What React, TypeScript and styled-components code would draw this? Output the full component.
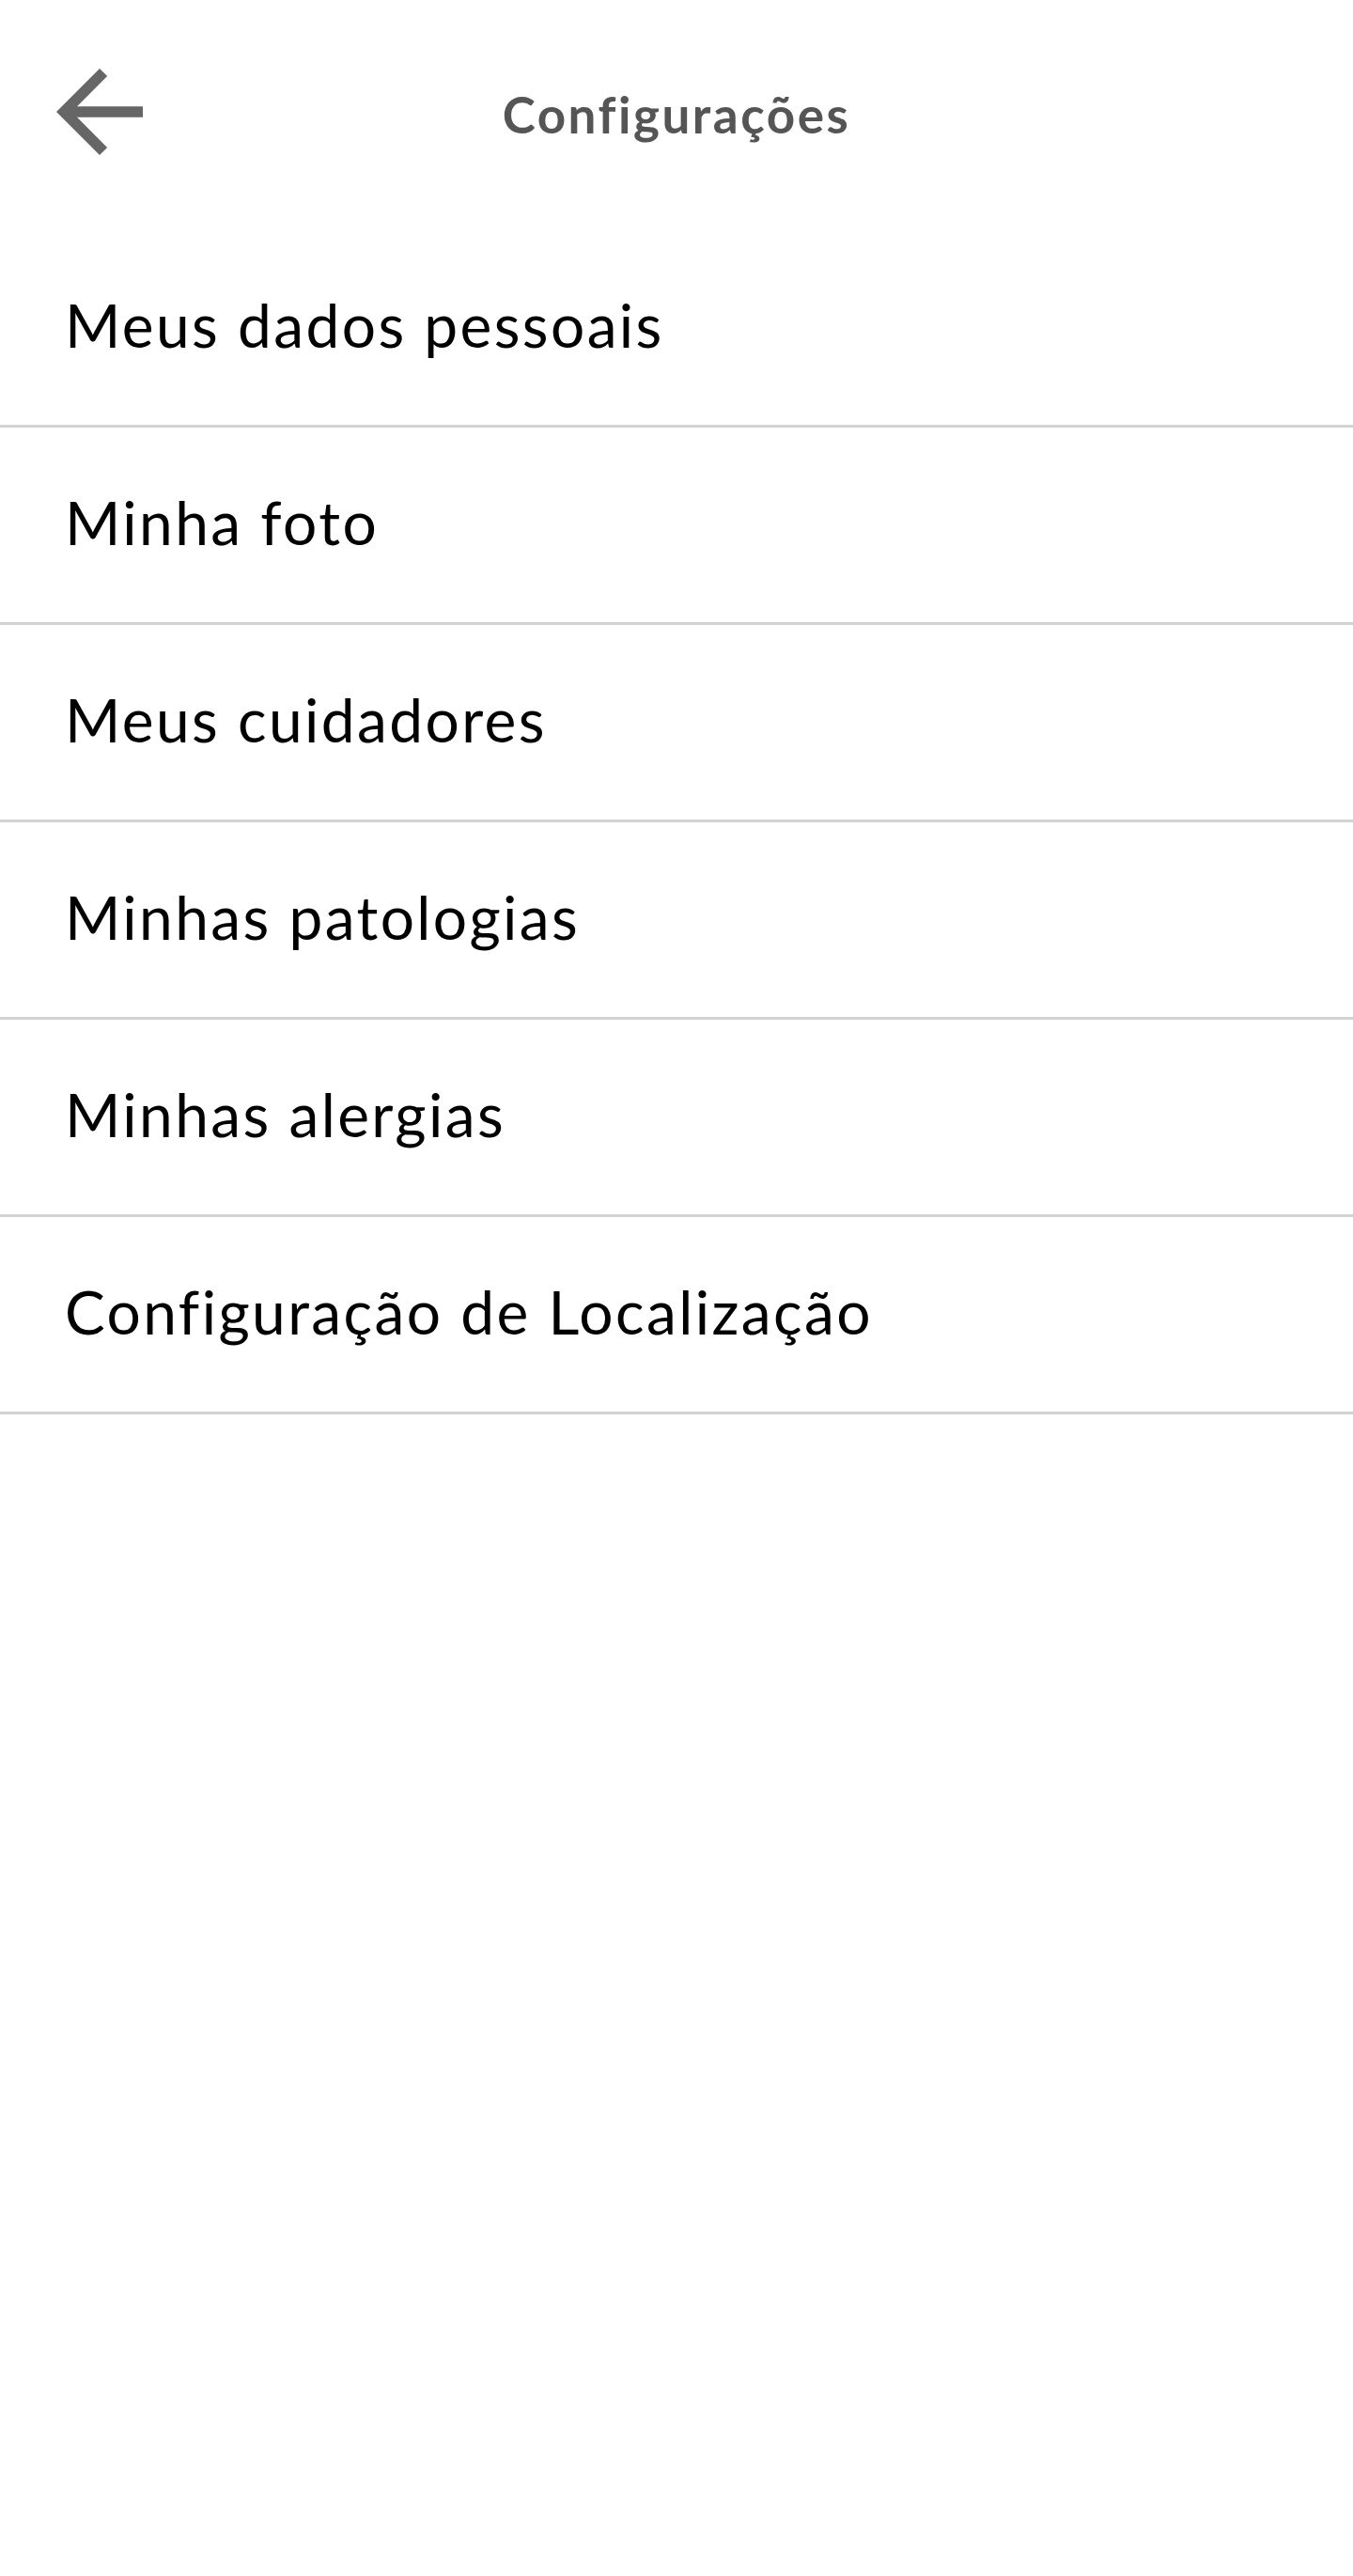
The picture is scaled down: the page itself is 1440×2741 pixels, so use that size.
import React from "react";
import styled, { createGlobalStyle } from "styled-components";

const GlobalStyle = createGlobalStyle`
  html, body {
    margin: 0;
    padding: 0;
    background: #ffffff;
  }
  body {
    font-family: "Lato", "Noto Sans", sans-serif;
  }
`;

const Screen = styled.div`
  width: 1440px;
  min-height: 2741px;
  background: #ffffff;
  display: flex;
  flex-direction: column;
`;

const Header = styled.header`
  height: 245px;
  display: grid;
  grid-template-columns: 200px 1fr 200px;
  align-items: start;
`;

const BackButton = styled.button`
  margin: 50px 0 0 37px;
  padding: 0;
  border: none;
  background: transparent;
  width: 138px;
  height: 138px;
  display: flex;
  cursor: pointer;
`;

const Title = styled.h1`
  margin: 0;
  padding-top: 87px;
  text-align: center;
  font-family: "Lato", sans-serif;
  font-weight: 700;
  font-size: 53px;
  letter-spacing: 2.5px;
  line-height: 70px;
  color: #555555;
`;

const List = styled.ul`
  list-style: none;
  margin: 0;
  padding: 0;
`;

const Item = styled.li`
  height: 210px;
  box-sizing: border-box;
  padding: 0 0 6px 69px;
  border-bottom: 3px solid #d3d3d3;
  display: flex;
  align-items: center;
  font-family: "Lato", sans-serif;
  font-size: 64px;
  letter-spacing: 2.4px;
  color: #000000;
  cursor: pointer;
`;

const ArrowBack = () => (
  <svg width="138" height="138" viewBox="0 0 24 24" fill="#666666">
    <path d="M20 11H7.83l5.59-5.59L12 4l-8 8 8 8 1.41-1.41L7.83 13H20v-2z" />
  </svg>
);

const items = [
  "Meus dados pessoais",
  "Minha foto",
  "Meus cuidadores",
  "Minhas patologias",
  "Minhas alergias",
  "Configuração de Localização",
];

export default function App() {
  return (
    <Screen>
      <GlobalStyle />
      <Header>
        <BackButton aria-label="Voltar">
          <ArrowBack />
        </BackButton>
        <Title>Configurações</Title>
        <div />
      </Header>
      <List>
        {items.map((t) => (
          <Item key={t}>{t}</Item>
        ))}
      </List>
    </Screen>
  );
}
